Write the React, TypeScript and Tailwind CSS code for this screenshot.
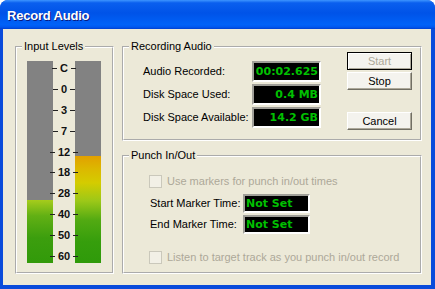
import React from 'react';

const ticks = ['C', '0', '3', '7', '12', '18', '28', '40', '50', '60'];

const Lcd: React.FC<{ value: string; w: string; h: string; left?: boolean }> = ({ value, w, h, left }) => (
  <div
    className={`${w} ${h} border-2 border-t-[#a09f98] border-l-[#a09f98] border-b-white border-r-white bg-black flex items-center ${
      left ? 'justify-start pl-[1px]' : 'justify-end pr-[1px]'
    } font-['DejaVu_Sans',sans-serif] font-bold text-[11px] leading-none text-[#00c000]`}
  >
    {value}
  </div>
);

const Check: React.FC<{ label: string }> = ({ label }) => (
  <div className="h-[15px] flex items-center gap-[5px] text-[#aca899]">
    <div className="w-[13px] h-[13px] border border-[#cac8bb] bg-[#f2f0e6]" />
    <span>{label}</span>
  </div>
);

const groupBox = 'border-2 border-white [border-style:groove] min-w-0';
const legendCls = 'ml-[5px] px-[2px] leading-[13px] text-black';

export default function App() {
  return (
    <div className="w-[435px] h-[289px] bg-white font-['Liberation_Sans',Arial,sans-serif] text-[11px] text-black">
      <div className="w-full h-full rounded-t-[8px] overflow-hidden bg-[#0a4bdb] flex flex-col">
        {/* title bar */}
        <div className="h-[29px] shrink-0 flex items-center pl-[7px] pt-[2px] bg-[linear-gradient(to_bottom,#3d95ff_0%,#0a5fee_10%,#0053e8_45%,#0062f8_85%,#0058f0_93%,#0040d0_100%)]">
          <span className="text-white font-bold text-[13px] tracking-[-0.2px] [text-shadow:1px_1px_#0a1a80]">Record Audio</span>
        </div>

        {/* dialog body */}
        <div className="flex-1 ml-[3px] mr-[4px] mb-[4px] bg-[#ece9d8] flex gap-[8px] pl-[12px] pr-[9px] pt-[11px]">
          {/* Input levels */}
          <fieldset className={`${groupBox} w-[99px] h-[234px]`}>
            <legend className={legendCls}>Input Levels</legend>
            <div className="flex mt-[8px] pl-[10px]">
              <div className="w-[26px] h-[202px] bg-[#828282] flex flex-col justify-end">
                <div className="h-[63px] bg-[linear-gradient(to_bottom,#a6cc1c_0%,#62b014_25%,#3c9e0e_60%,#329a0a_100%)]" />
              </div>
              <div className="w-[22px] h-[202px] pt-[1px] flex flex-col justify-between relative z-10">
                {ticks.map(t => (
                  <div key={t} className="h-[13px] flex items-center justify-center gap-[3px]">
                    <div className="w-[5px] h-px bg-[#222] shrink-0" />
                    <span className="font-bold text-[11px] leading-none text-[#111]">{t}</span>
                    <div className="w-[5px] h-px bg-[#222] shrink-0" />
                  </div>
                ))}
              </div>
              <div className="w-[26px] h-[202px] bg-[#828282] flex flex-col justify-end">
                <div className="h-[107px] bg-[linear-gradient(to_bottom,#e2a000_0%,#dcb800_12%,#d4cc00_25%,#9cc818_42%,#52aa12_60%,#369e0c_80%,#2f9a0a_100%)]" />
              </div>
            </div>
          </fieldset>

          <div className="w-[300px] flex flex-col gap-[8px]">
            {/* Recording audio */}
            <fieldset className={`${groupBox} h-[101px]`}>
              <legend className={legendCls}>Recording Audio</legend>
              <div className="flex items-start pl-[19px]">
                <div className="flex flex-col gap-[2px] pt-[8px]">
                  {[
                    ['Audio Recorded:', '00:02.625'],
                    ['Disk Space Used:', '0.4 MB'],
                    ['Disk Space Available:', '14.2 GB'],
                  ].map(([label, value]) => (
                    <div key={label} className="h-[21px] flex items-center">
                      <span className="w-[109px]">{label}</span>
                      <Lcd value={value} w="w-[69px]" h="h-[21px]" />
                    </div>
                  ))}
                </div>
                <div className="ml-[26px] -mt-px flex flex-col w-[65px]">
                  <button className="h-[18px] border border-black bg-[#f4f3ee] shadow-[inset_1px_1px_0_#fff,inset_-1px_-1px_0_#aca899] text-[#aca899]">
                    Start
                  </button>
                  <button className="mt-[2px] h-[18px] border border-t-white border-l-white border-r-[#716f64] border-b-[#716f64] bg-[#f4f3ee] shadow-[inset_-1px_-1px_0_#aca899]">
                    Stop
                  </button>
                  <button className="mt-[22px] h-[18px] border border-t-white border-l-white border-r-[#716f64] border-b-[#716f64] bg-[#f4f3ee] shadow-[inset_-1px_-1px_0_#aca899]">
                    Cancel
                  </button>
                </div>
              </div>
            </fieldset>

            {/* Punch in/out */}
            <fieldset className={`${groupBox} h-[125px]`}>
              <legend className={legendCls}>Punch In/Out</legend>
              <div className="pl-[25px] pt-[12px] flex flex-col">
                <Check label="Use markers for punch in/out times" />
                <div className="mt-[5px] flex flex-col gap-[2px] pl-px">
                  <div className="flex items-center">
                    <span className="w-[93px]">Start Marker Time:</span>
                    <Lcd value="Not Set" w="w-[67px]" h="h-[19px]" left />
                  </div>
                  <div className="flex items-center">
                    <span className="w-[93px]">End Marker Time:</span>
                    <Lcd value="Not Set" w="w-[67px]" h="h-[19px]" left />
                  </div>
                </div>
                <div className="mt-[16px]">
                  <Check label="Listen to target track as you punch in/out record" />
                </div>
              </div>
            </fieldset>
          </div>
        </div>
      </div>
    </div>
  );
}
